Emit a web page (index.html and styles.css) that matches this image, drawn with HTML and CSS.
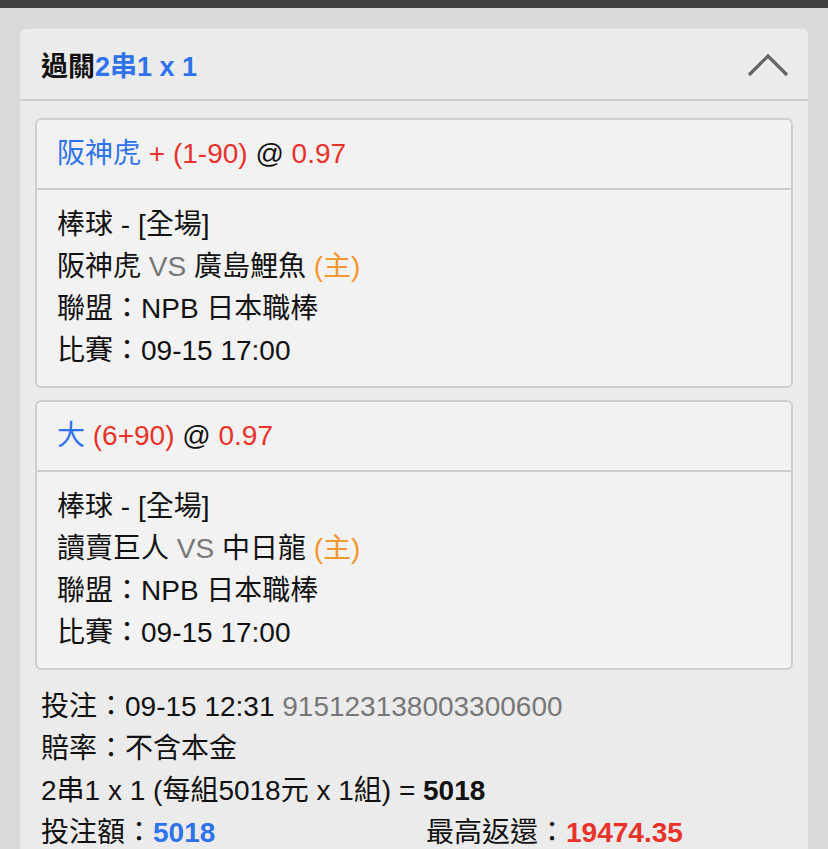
FILE: index.html
```html
<!DOCTYPE html>
<html lang="zh-Hant">
<head>
    <meta charset="UTF-8">
    <meta name="viewport" content="width=device-width, initial-scale=1.0">
    <title>過關 2串1</title>
    <link rel="stylesheet" href="styles.css">
</head>
<body>
    <div class="topbar"></div>
    <div class="panel">
        <div class="panel-head">
            <h2 class="panel-title">過關<span class="blue">2串1 x 1</span></h2>
            <svg class="chevron" width="42" height="24" viewBox="0 0 42 24">
                <polyline points="2,22 21,3 40,22" fill="none" stroke="#666" stroke-width="3.2"/>
            </svg>
        </div>
        <div class="panel-body">
            <div class="bet">
                <div class="bet-head">
                    <span class="blue">阪神虎</span> <span class="red">+ (1-90)</span> @ <span class="red">0.97</span>
                </div>
                <div class="bet-body">
                    <p>棒球 - [全場]</p>
                    <p>阪神虎 <span class="gray">VS</span> 廣島鯉魚 <span class="orange">(主)</span></p>
                    <p>聯盟：NPB 日本職棒</p>
                    <p>比賽：09-15 17:00</p>
                </div>
            </div>
            <div class="bet">
                <div class="bet-head">
                    <span class="blue">大</span> <span class="red">(6+90)</span> @ <span class="red">0.97</span>
                </div>
                <div class="bet-body">
                    <p>棒球 - [全場]</p>
                    <p>讀賣巨人 <span class="gray">VS</span> 中日龍 <span class="orange">(主)</span></p>
                    <p>聯盟：NPB 日本職棒</p>
                    <p>比賽：09-15 17:00</p>
                </div>
            </div>
            <div class="summary">
                <p>投注：09-15 12:31 <span class="gray">915123138003300600</span></p>
                <p>賠率：不含本金</p>
                <p>2串1 x 1 (每組5018元 x 1組) = <b>5018</b></p>
                <div class="totals">
                    <p>投注額：<b class="blue">5018</b></p>
                    <p>最高返還：<b class="red">19474.35</b></p>
                </div>
            </div>
        </div>
    </div>
</body>
</html>
```

FILE: styles.css
```css
body {
    margin: 0;
    background-color: #d9d9d9;
    font-family: "Liberation Sans", "Noto Sans CJK TC", sans-serif;
    font-size: 28px;
    color: #111;
}
p {
    margin: 0;
}
.topbar {
    height: 8px;
    background-color: #404040;
}
.panel {
    margin: 21px 20px 0;
    background-color: #ebebeb;
    border-radius: 6px;
}
.panel-head {
    height: 70px;
    display: flex;
    align-items: center;
    justify-content: space-between;
    padding: 0 19px 0 21px;
    border-bottom: 2px solid #cdcdcd;
}
.panel-title {
    margin: 0;
    font-size: 27px;
    font-weight: bold;
}
.chevron {
    display: block;
    margin-top: 2px;
}
.panel-body {
    padding: 17px 15px 20px;
}
.bet {
    background-color: #f2f2f2;
    border: 2px solid #cecece;
    border-radius: 6px;
    margin-bottom: 12px;
}
.bet-head {
    height: 68px;
    line-height: 68px;
    padding: 0 20px;
    border-bottom: 2px solid #cecece;
}
.bet-body {
    padding: 14px 20px;
    line-height: 42px;
}
.summary {
    padding: 4px 6px 0;
    line-height: 42px;
}
.totals {
    display: grid;
    grid-template-columns: 385px auto;
}
.blue {
    color: #2f73ec;
}
.red {
    color: #e8322a;
}
.orange {
    color: #f2962f;
}
.gray {
    color: #777;
}
```
